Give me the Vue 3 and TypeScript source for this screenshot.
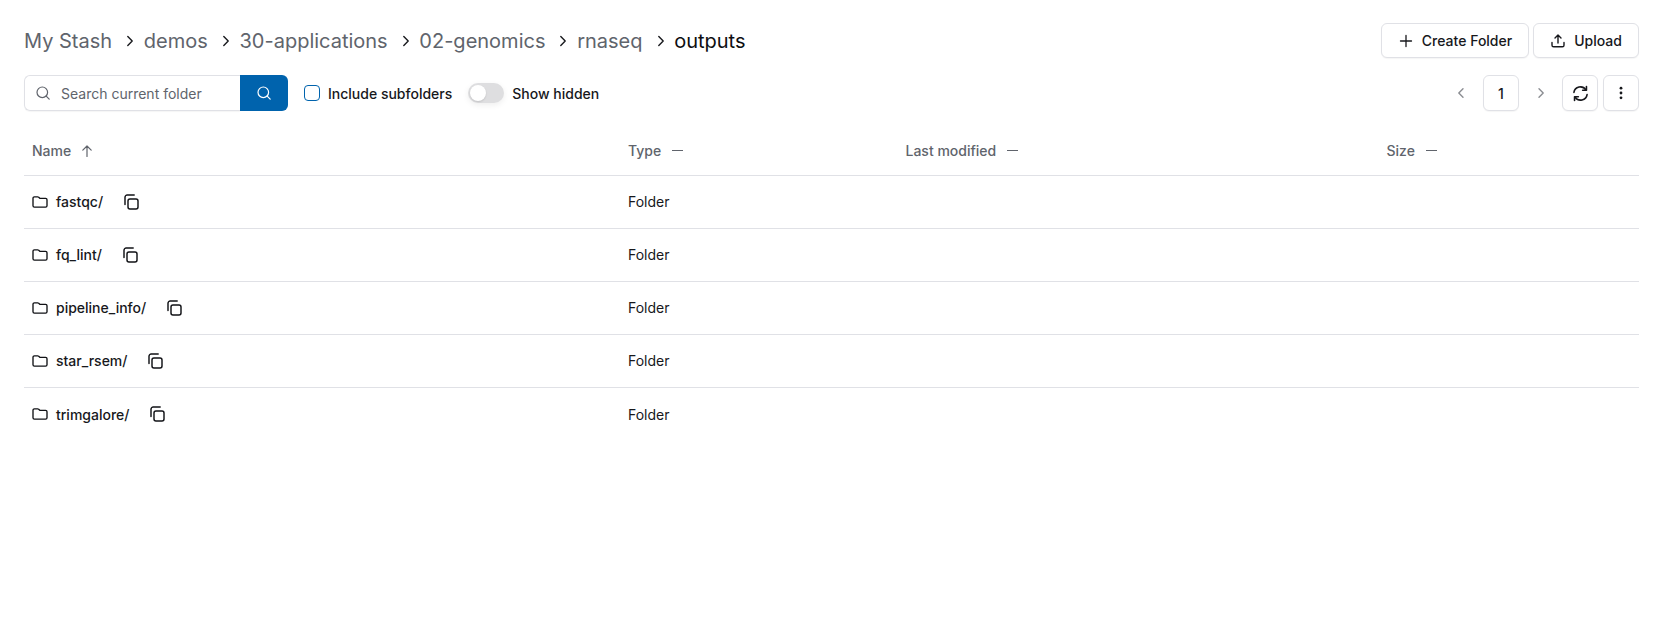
<script setup lang="ts">
const crumbs: string[] = ['My Stash', 'demos', '30-applications', '02-genomics', 'rnaseq']
const rows: string[] = ['fastqc/', 'fq_lint/', 'pipeline_info/', 'star_rsem/', 'trimgalore/']
</script>

<template>
  <div class="page">
    <div class="top">
      <nav class="crumbs">
        <template v-for="c in crumbs" :key="c">
          <span class="crumb">{{ c }}</span>
          <svg class="sep" width="16" height="16" viewBox="0 0 16 16" fill="none"><path d="M5.8 3.6l4.4 4.4-4.4 4.4" stroke="#17181c" stroke-width="1.4" stroke-linecap="round" stroke-linejoin="round"/></svg>
        </template>
        <span class="crumb current">outputs</span>
      </nav>
      <div class="actions">
        <button class="btn create">
          <svg width="16" height="16" viewBox="0 0 16 16" fill="none"><path d="M8 2.5v11M2.5 8h11" stroke="#17181c" stroke-width="1.3" stroke-linecap="round"/></svg>
          Create Folder
        </button>
        <button class="btn upload">
          <svg width="16" height="16" viewBox="0 0 16 16" fill="none"><path d="M8 10V2.3M5 5l3-3 3 3M2 9.5v2.7c0 .9.7 1.6 1.6 1.6h8.8c.9 0 1.6-.7 1.6-1.6V9.5" stroke="#17181c" stroke-width="1.4" stroke-linecap="round" stroke-linejoin="round"/></svg>
          Upload
        </button>
      </div>
    </div>

    <div class="tools">
      <div class="search">
        <div class="field">
          <svg width="16" height="16" viewBox="0 0 16 16" fill="none"><circle cx="7.3" cy="7.3" r="5.3" stroke="#60646c" stroke-width="1.2"/><path d="M11.2 11.2l3 3" stroke="#60646c" stroke-width="1.2" stroke-linecap="round"/></svg>
          <span class="placeholder">Search current folder</span>
        </div>
        <button class="go">
          <svg width="16" height="16" viewBox="0 0 16 16" fill="none"><circle cx="7.3" cy="7.3" r="5.3" stroke="#fff" stroke-width="1.2"/><path d="M11.2 11.2l3 3" stroke="#fff" stroke-width="1.2" stroke-linecap="round"/></svg>
        </button>
      </div>
      <label class="check"><span class="box"></span>Include subfolders</label>
      <label class="toggle"><span class="track"><span class="thumb"></span></span>Show hidden</label>
      <div class="right">
        <svg class="pg" width="16" height="16" viewBox="0 0 16 16" fill="none"><path d="M10 3.8L5.8 8l4.2 4.2" stroke="#8b8d92" stroke-width="1.4" stroke-linecap="round" stroke-linejoin="round"/></svg>
        <button class="sq page-num">1</button>
        <svg class="pg" width="16" height="16" viewBox="0 0 16 16" fill="none"><path d="M6 3.8L10.2 8 6 12.2" stroke="#8b8d92" stroke-width="1.4" stroke-linecap="round" stroke-linejoin="round"/></svg>
        <button class="sq refresh">
          <svg width="17" height="17" viewBox="0 0 16 16" fill="none"><path d="M1.8 7A6.2 6.2 0 0 1 13 4.4M14.2 9A6.2 6.2 0 0 1 3 11.6" stroke="#17181c" stroke-width="1.5" stroke-linecap="round"/><path d="M13.6 1.4V5h-3.6M2.4 14.6V11H6" stroke="#17181c" stroke-width="1.5" stroke-linecap="round" stroke-linejoin="round"/></svg>
        </button>
        <button class="sq">
          <svg width="16" height="16" viewBox="0 0 16 16" fill="#17181c"><circle cx="8" cy="3.2" r="1.4"/><circle cx="8" cy="8" r="1.4"/><circle cx="8" cy="12.8" r="1.4"/></svg>
        </button>
      </div>
    </div>

    <div class="table">
      <div class="row head">
        <div class="cell name">Name
          <svg class="arrow" width="14" height="14" viewBox="0 0 14 14" fill="none"><path d="M7 12.5V2M2.8 6.2L7 2l4.2 4.2" stroke="#60646c" stroke-width="1.2" stroke-linecap="round" stroke-linejoin="round"/></svg>
        </div>
        <div class="cell type">Type <i class="dash"></i></div>
        <div class="cell mod">Last modified <i class="dash"></i></div>
        <div class="cell size">Size <i class="dash"></i></div>
      </div>
      <div v-for="r in rows" :key="r" class="row item">
        <div class="cell name">
          <svg class="folder" width="16" height="16" viewBox="0 0 16 16" fill="none"><path d="M1 4.2c0-.8.6-1.4 1.4-1.4h3.3c.4 0 .7.2 1 .4l1.1 1.1h5.8c.8 0 1.4.6 1.4 1.4v6c0 .8-.6 1.4-1.4 1.4H2.4c-.8 0-1.4-.6-1.4-1.4V4.2z" stroke="#111216" stroke-width="1.35" stroke-linejoin="round"/></svg>
          <span class="fname">{{ r }}</span>
          <svg class="copy" width="16" height="16" viewBox="0 0 16 16" fill="none"><rect x="5" y="5" width="10" height="10" rx="2" stroke="#111216" stroke-width="1.45"/><path d="M2 10.5V3.2C2 2 3 1 4.2 1h7" stroke="#111216" stroke-width="1.45" stroke-linecap="round"/></svg>
        </div>
        <div class="cell type">Folder</div>
        <div class="cell mod"></div>
        <div class="cell size"></div>
      </div>
    </div>
  </div>
</template>

<style>
html, body { margin: 0; background: #fff; }
</style>

<style scoped>
.page {
  box-sizing: border-box;
  width: 1658px;
  height: 628px;
  padding: 23px 19px 0 24px;
  font-family: Inter, "Liberation Sans", sans-serif;
  font-size: 14px;
  color: #17181c;
  background: #fff;
}
.top { display: flex; justify-content: space-between; align-items: center; height: 35px; }
.crumbs { display: flex; align-items: center; font-size: 20px; color: #60646c; }
.sep { margin: 0 5.7px 0 10px; }
.current { color: #0d0e11; }
.actions { display: flex; gap: 4px; }
.btn, .sq {
  box-sizing: border-box;
  height: 35px;
  display: inline-flex;
  align-items: center;
  justify-content: center;
  background: #fff;
  border: 1px solid #e0e1e6;
  border-radius: 6px;
  box-shadow: 0 1px 1px rgba(0,0,0,.04);
  font: inherit;
  font-weight: 500;
  color: #17181c;
  padding: 0;
}
.btn { gap: 8px; }
.create { width: 148px; }
.upload { width: 106px; }
.tools { display: flex; align-items: center; margin-top: 17px; height: 36px; }
.search { display: flex; width: 264px; height: 36px; }
.field {
  box-sizing: border-box;
  flex: 1;
  display: flex;
  align-items: center;
  gap: 10px;
  padding-left: 10px;
  border: 1px solid #e0e1e6;
  border-right: 0;
  border-radius: 6px 0 0 6px;
  box-shadow: 0 1px 1px rgba(0,0,0,.04);
}
.placeholder { color: #60646c; }
.go {
  width: 48px;
  border: 0;
  padding: 0;
  background: #0063ad;
  border-radius: 0 6px 6px 0;
  display: flex;
  align-items: center;
  justify-content: center;
}
.check, .toggle { display: flex; align-items: center; font-weight: 500; }
.check { margin-left: 16px; gap: 8px; }
.box {
  box-sizing: border-box;
  width: 16px;
  height: 16px;
  border: 1px solid #0063ad;
  border-radius: 4px;
}
.toggle { margin-left: 16px; gap: 8px; }
.track {
  width: 36px;
  height: 20px;
  border-radius: 10px;
  background: #dedee0;
  box-shadow: 0 2px 6px rgba(0,0,0,.07);
  display: block;
  position: relative;
}
.thumb {
  position: absolute;
  left: 2px;
  top: 2px;
  width: 16px;
  height: 16px;
  border-radius: 50%;
  background: #fff;
  box-shadow: 0 1px 2px rgba(0,0,0,.12);
}
.right { margin-left: auto; display: flex; align-items: center; }
.pg { margin: 0 9px; }
.sq { width: 36px; height: 36px; }
.page-num { margin: 0 5px; }
.refresh { margin: 0 5px 0 4px; }
.table { margin-top: 11px; }
.row { display: grid; grid-template-columns: 596px 277.5px 481px 1fr; }
.head {
  height: 54px;
  padding-top: 4px;
  border-bottom: 1px solid #e0e1e6;
  color: #60646c;
  font-weight: 500;
  box-sizing: border-box;
}
.item { height: 53px; padding-bottom: 1px; border-bottom: 1px solid #e0e1e6; box-sizing: border-box; }
.item:last-child { border-bottom: 0; }
.cell { display: flex; align-items: center; padding: 0 8px; min-width: 0; }
.head .cell { gap: 8px; }
.arrow { margin-left: 1px; }
.dash { display: block; width: 11px; height: 1.5px; background: #60646c; margin-left: 3px; }
.fname { margin-left: 8px; font-weight: 500; font-size: 14px; }
.copy { margin-left: 20px; }
</style>
